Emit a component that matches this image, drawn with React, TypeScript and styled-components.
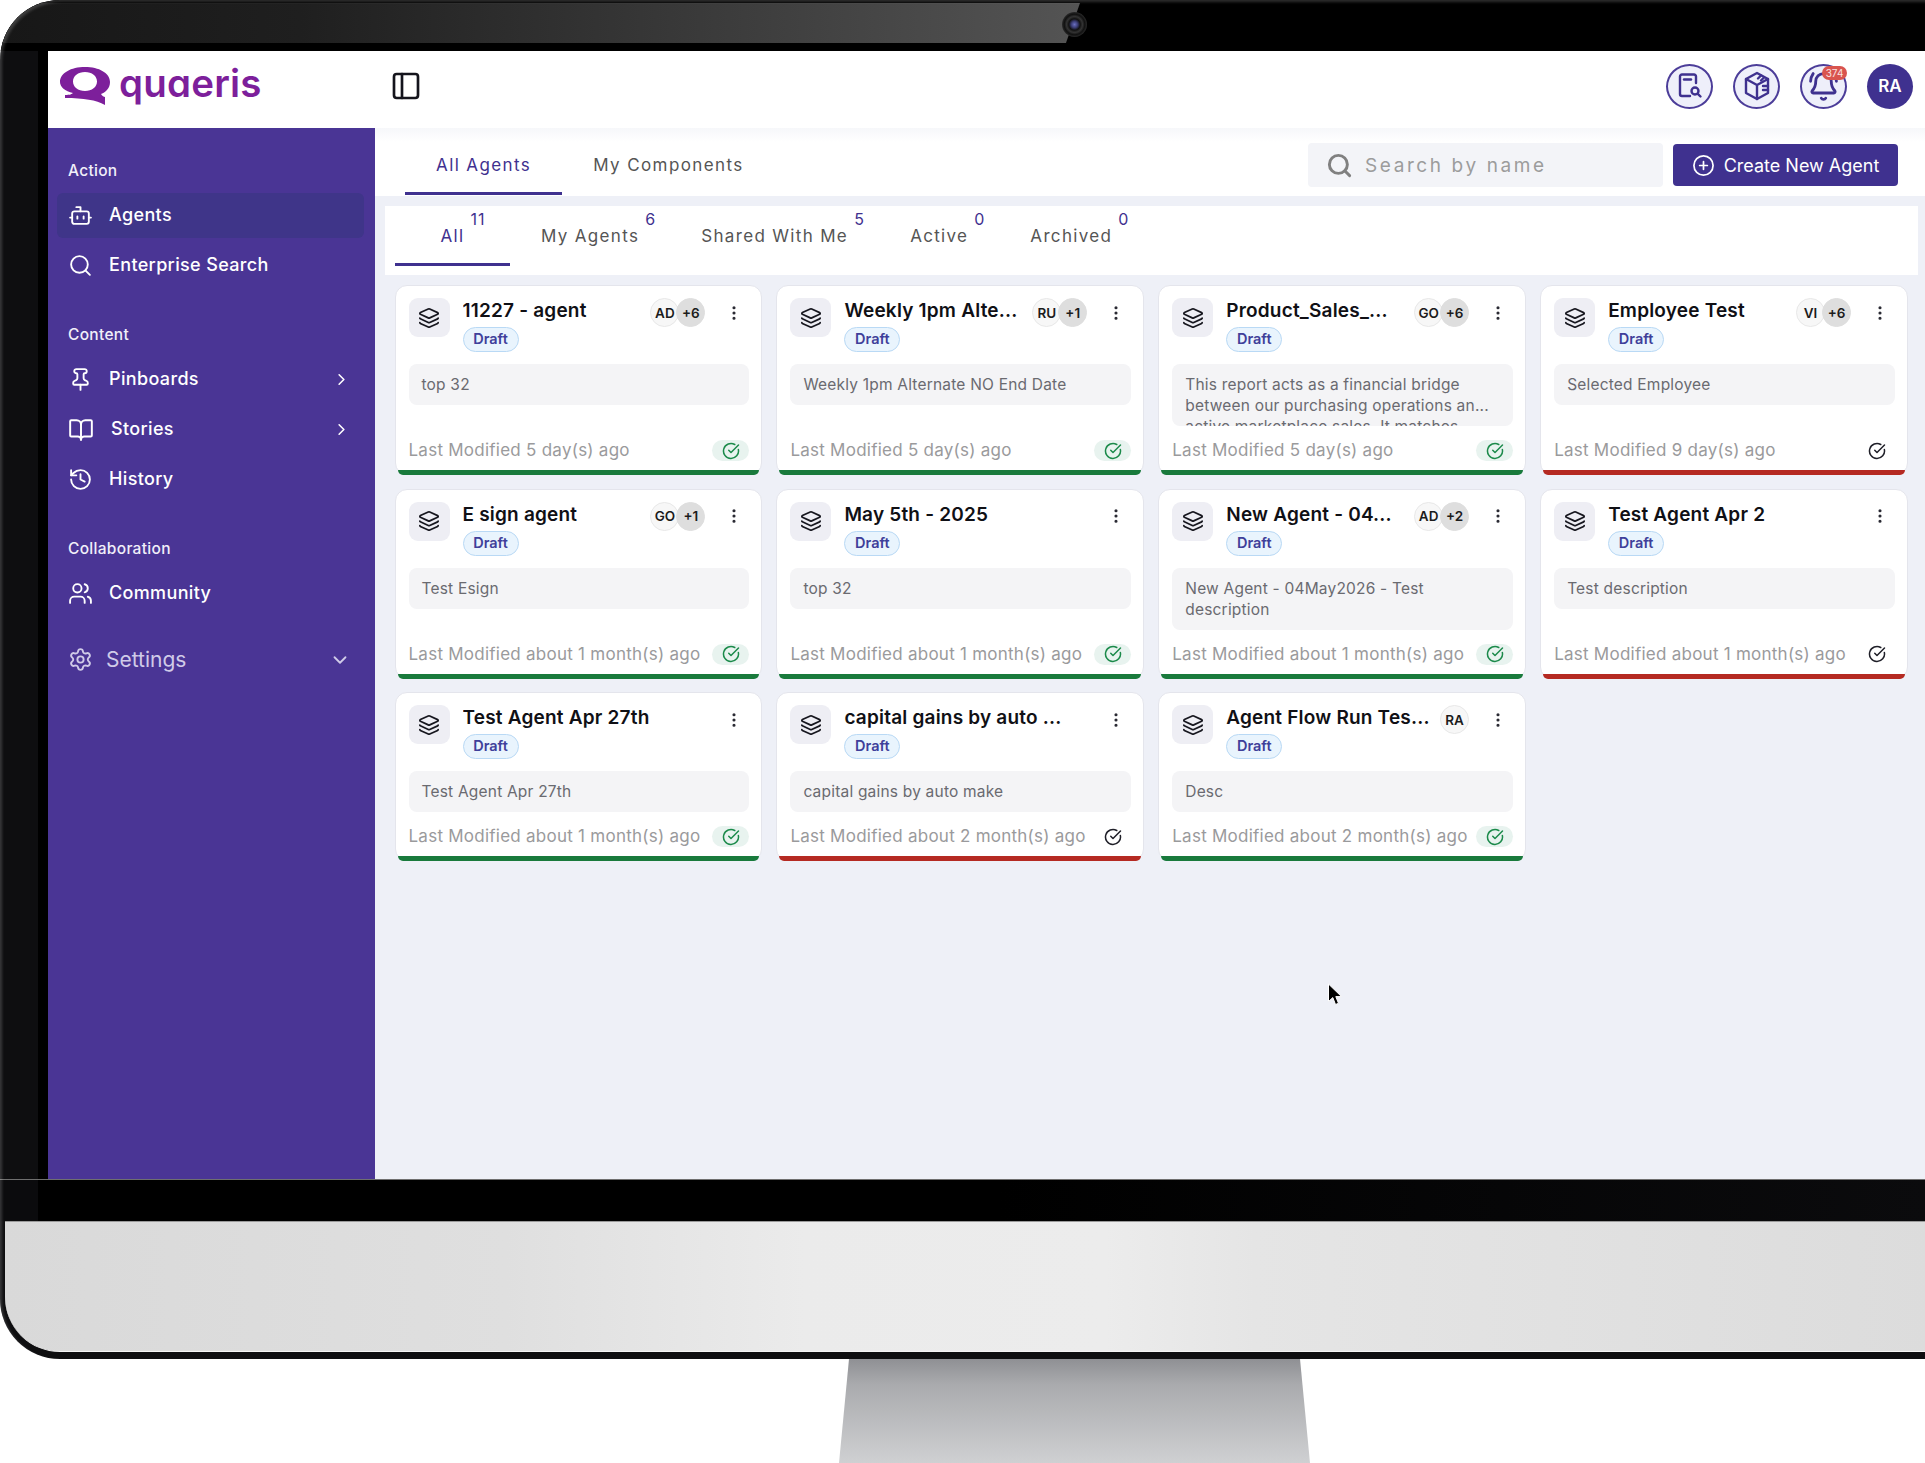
import React from 'react';
import styled, { createGlobalStyle } from 'styled-components';
import {
    Bot,
    BookOpen,
    ChevronDown,
    ChevronRight,
    CircleCheckBig,
    CirclePlus,
    EllipsisVertical,
    History,
    Layers,
    PanelLeft,
    Pin,
    Search,
    Settings,
    Users,
    BellRing,
} from 'lucide-react';

const PURPLE = '#3f318f';
const FONT = 'Inter, "Open Sans", sans-serif';

interface AgentCard {
    title: string;
    lines: string[];
    modified: string;
    owner?: string;
    extra?: string;
    published: boolean;
}

const agents: AgentCard[] = [
    { title: '11227 - agent', lines: ['top 32'], modified: '5 day(s)', owner: 'AD', extra: '+6', published: true },
    { title: 'Weekly 1pm Alte...', lines: ['Weekly 1pm Alternate NO End Date'], modified: '5 day(s)', owner: 'RU', extra: '+1', published: true },
    {
        title: 'Product_Sales_...',
        lines: ['This report acts as a financial bridge', 'between our purchasing operations an...', 'active marketplace sales. It matches'],
        modified: '5 day(s)',
        owner: 'GO',
        extra: '+6',
        published: true,
    },
    { title: 'Employee Test', lines: ['Selected Employee'], modified: '9 day(s)', owner: 'VI', extra: '+6', published: false },
    { title: 'E sign agent', lines: ['Test Esign'], modified: 'about 1 month(s)', owner: 'GO', extra: '+1', published: true },
    { title: 'May 5th - 2025', lines: ['top 32'], modified: 'about 1 month(s)', published: true },
    {
        title: 'New Agent - 04...',
        lines: ['New Agent - 04May2026 - Test', 'description'],
        modified: 'about 1 month(s)',
        owner: 'AD',
        extra: '+2',
        published: true,
    },
    { title: 'Test Agent Apr 2', lines: ['Test description'], modified: 'about 1 month(s)', published: false },
    { title: 'Test Agent Apr 27th', lines: ['Test Agent Apr 27th'], modified: 'about 1 month(s)', published: true },
    { title: 'capital gains by auto ...', lines: ['capital gains by auto make'], modified: 'about 2 month(s)', published: false },
    { title: 'Agent Flow Run Tes...', lines: ['Desc'], modified: 'about 2 month(s)', extra: 'RA', published: true },
];

const filters = [
    { label: 'All', count: '11' },
    { label: 'My Agents', count: '6' },
    { label: 'Shared With Me', count: '5' },
    { label: 'Active', count: '0' },
    { label: 'Archived', count: '0' },
];

const Logo = () => (
    <LogoWrap>
        <svg width="50" height="38" viewBox="0 0 50 38">
            <path
                fill="#7d1f9b"
                fillRule="evenodd"
                d="M25 0C39 0 50 6 50 15C50 21 46 25 41 27C42 29 44 30 45 30L45 38C36 33 24 31 5 31L5 28C10 28 12 27 13 26C5 24 0 20 0 15C0 6 11 0 25 0ZM25 5C18 5 13 9 13 14.500C13 20 18 24 25 24C32 24 37 20 37 14.500C37 9 32 5 25 5Z"
            />
        </svg>
        <LogoText>quaeris</LogoText>
    </LogoWrap>
);

const ReportIcon = () => (
    <svg width="26" height="28" viewBox="0 0 26 28" fill="none" stroke={PURPLE} strokeWidth="2.400" strokeLinecap="round" strokeLinejoin="round">
        <path d="M19 11V4.500A2 2 0 0 0 17 2.500H5A2 2 0 0 0 3 4.500V22A2 2 0 0 0 5 24H13" />
        <path d="M7 7.500H14" />
        <circle cx="18" cy="19" r="3.500" />
        <path d="M20.800 21.800L23.500 24.500" />
    </svg>
);

const BoxIcon = () => (
    <svg width="28" height="30" viewBox="0 0 28 30" fill="none" stroke={PURPLE} strokeWidth="2.400" strokeLinecap="round" strokeLinejoin="round">
        <path d="M14 2L25 8V22L14 28L3 22V8L14 2Z" />
        <path d="M3 8L14 14L25 8M14 14V28" />
        <path d="M18 4.500L15 7.500M21 6.500L18 9.500M20 15H25M20 19H25" />
    </svg>
);

const Cursor = () => (
    <CursorWrap>
        <svg width="16" height="24" viewBox="0 0 16 24">
            <path d="M1.500 1V18.500L5.800 14.600L8.500 21.500L11.500 20.300L8.800 13.600H14.500L1.500 1Z" fill="#000" stroke="#fff" strokeWidth="1" />
        </svg>
    </CursorWrap>
);

const Card = ({ agent }: { agent: AgentCard }) => (
    <CardBox>
        <CardHead>
            <IconTile>
                <Layers size={22} strokeWidth={1.9} color="#17171f" />
            </IconTile>
            <TitleCol>
                <CardTitle>{agent.title}</CardTitle>
                <DraftPill>Draft</DraftPill>
            </TitleCol>
            <Avatars>
                {agent.owner && <Avatar>{agent.owner}</Avatar>}
                {agent.extra && <Avatar $muted={agent.extra !== 'RA'}>{agent.extra}</Avatar>}
            </Avatars>
            <Kebab>
                <EllipsisVertical size={18} strokeWidth={2.2} color="#2a2a33" />
            </Kebab>
        </CardHead>
        <Description>
            {agent.lines.map((line) => (
                <DescLine key={line}>{line}</DescLine>
            ))}
        </Description>
        <CardFoot>
            <Modified>Last Modified {agent.modified} ago</Modified>
            <StatusPill $on={agent.published}>
                <CircleCheckBig size={18} strokeWidth={2} color={agent.published ? '#1b8a4a' : '#1f1f28'} />
            </StatusPill>
        </CardFoot>
        <StatusBar $on={agent.published} />
    </CardBox>
);

const App = () => (
    <>
        <GlobalStyle />
        <Monitor>
            <TopBezel>
                <Sheen />
                <Camera />
            </TopBezel>
            <Screen>
                <Sidebar>
                    <Logo />
                    <Nav>
                        <NavGroup>
                            <GroupLabel>Action</GroupLabel>
                            <NavRow $active>
                                <Bot size={25} strokeWidth={1.8} />
                                <NavText>Agents</NavText>
                            </NavRow>
                            <NavRow>
                                <Search size={25} strokeWidth={1.8} />
                                <NavText>Enterprise Search</NavText>
                            </NavRow>
                        </NavGroup>
                        <NavGroup>
                            <GroupLabel>Content</GroupLabel>
                            <NavRow>
                                <Pin size={25} strokeWidth={1.8} />
                                <NavText>Pinboards</NavText>
                                <Chevron>
                                    <ChevronRight size={19} strokeWidth={2} />
                                </Chevron>
                            </NavRow>
                            <NavRow>
                                <BookOpen size={26} strokeWidth={1.8} />
                                <NavText $shift>Stories</NavText>
                                <Chevron>
                                    <ChevronRight size={19} strokeWidth={2} />
                                </Chevron>
                            </NavRow>
                            <NavRow>
                                <History size={25} strokeWidth={1.8} />
                                <NavText>History</NavText>
                            </NavRow>
                        </NavGroup>
                        <NavGroup>
                            <GroupLabel>Collaboration</GroupLabel>
                            <NavRow>
                                <Users size={25} strokeWidth={1.8} />
                                <NavText>Community</NavText>
                            </NavRow>
                        </NavGroup>
                        <SettingsRow>
                            <Settings size={25} strokeWidth={1.8} />
                            <SettingsText>Settings</SettingsText>
                            <Chevron>
                                <ChevronDown size={22} strokeWidth={2} />
                            </Chevron>
                        </SettingsRow>
                    </Nav>
                </Sidebar>
                <Main>
                    <Header>
                        <PanelLeft size={32} strokeWidth={2} color="#14141c" />
                        <HeaderIcons>
                            <RoundIcon>
                                <ReportIcon />
                            </RoundIcon>
                            <RoundIcon>
                                <BoxIcon />
                            </RoundIcon>
                            <RoundIcon>
                                <BellRing size={31} strokeWidth={2.2} color={PURPLE} />
                                <Badge>374</Badge>
                            </RoundIcon>
                            <UserCircle>RA</UserCircle>
                        </HeaderIcons>
                    </Header>
                    <PrimaryBar>
                        <PrimaryTabs>
                            <PrimaryTab $active>All Agents</PrimaryTab>
                            <PrimaryTab>My Components</PrimaryTab>
                        </PrimaryTabs>
                        <SearchBox>
                            <Search size={27} strokeWidth={2.6} color="#808080" />
                            <SearchPlaceholder>Search by name</SearchPlaceholder>
                        </SearchBox>
                        <CreateButton>
                            <CirclePlus size={23} strokeWidth={1.8} />
                            Create New Agent
                        </CreateButton>
                    </PrimaryBar>
                    <FilterBar>
                        {filters.map((filter, index) => (
                            <FilterTab key={filter.label} $active={index === 0}>
                                <FilterLabel>
                                    {filter.label}
                                    <FilterCount>{filter.count}</FilterCount>
                                </FilterLabel>
                            </FilterTab>
                        ))}
                    </FilterBar>
                    <CardGrid>
                        {agents.map((agent) => (
                            <Card key={agent.title} agent={agent} />
                        ))}
                    </CardGrid>
                    <Cursor />
                </Main>
            </Screen>
            <BlackBand />
            <Chin />
        </Monitor>
        <Stand />
    </>
);

const GlobalStyle = createGlobalStyle`
    html, body {
        margin: 0;
        padding: 0;
        background: #fff;
        overflow: hidden;
    }
    * {
        box-sizing: border-box;
    }
    body {
        font-family: ${FONT};
    }
`;

const Monitor = styled.div`
    position: relative;
    width: 1925px;
    height: 1359px;
    display: flex;
    flex-direction: column;
    background: #0e0e10;
    border-radius: 60px 0 0 60px;
    overflow: hidden;
    &::after {
        content: '';
        position: absolute;
        inset: 0;
        border-radius: 60px 0 0 60px;
        box-shadow: inset 2px 2px 3px rgba(255, 255, 255, 0.18);
        pointer-events: none;
    }
`;

const TopBezel = styled.div`
    position: relative;
    flex: 0 0 51px;
    background: #000;
`;

const Sheen = styled.div`
    position: absolute;
    left: 0;
    top: 3px;
    width: 1080px;
    height: 40px;
    background: linear-gradient(90deg, #171717 0, #1f1f1f 300px, #3a3a3a 700px, #545454 1080px);
    clip-path: polygon(0 0, 100% 0, 98.700% 100%, 0 100%);
`;

const Camera = styled.div`
    position: absolute;
    left: 1062px;
    top: 12px;
    width: 25px;
    height: 25px;
    border-radius: 50%;
    background: radial-gradient(circle, #6a6fc0 0, #3b3d75 18%, #111 32%, #333 45%, #111 58%, #2c2c2c 72%, #070707 85%);
`;

const Screen = styled.div`
    flex: 0 0 1128px;
    margin-left: 38px;
    display: flex;
    border-left: 10px solid #000;
`;

const Sidebar = styled.aside`
    flex: 0 0 327px;
    display: flex;
    flex-direction: column;
    background: #4a3595;
`;

const LogoWrap = styled.div`
    flex: 0 0 77px;
    display: flex;
    align-items: flex-start;
    gap: 9px;
    padding: 16px 0 0 12px;
    background: #fff;
`;

const LogoText = styled.span`
    color: #7d1f9b;
    font-size: 38.500px;
    font-weight: 600;
    font-feature-settings: 'cv11';
    line-height: 32px;
    letter-spacing: 0.2px;
`;

const Nav = styled.nav`
    display: flex;
    flex-direction: column;
    padding: 33px 11px 0 9px;
`;

const NavGroup = styled.div`
    display: flex;
    flex-direction: column;
    gap: 5px;
    margin-bottom: 37px;
    &:nth-child(3) {
        margin-bottom: 21px;
    }
`;

const GroupLabel = styled.div`
    height: 20px;
    margin: 0 0 7px 11px;
    color: #f1eff9;
    font-size: 15.500px;
    font-weight: 500;
    line-height: 20px;
    letter-spacing: 0.3px;
`;

const NavRow = styled.div<{ $active?: boolean }>`
    height: 45px;
    display: flex;
    align-items: center;
    padding: 0 13px 0 11px;
    border-radius: 6px;
    color: #fff;
    background: ${(p) => (p.$active ? '#3f3589' : 'transparent')};
`;

const NavText = styled.span<{ $shift?: boolean }>`
    margin-left: ${(p) => (p.$shift ? '17px' : '16px')};
    padding-bottom: 2px;
    font-size: 18px;
    font-weight: 500;
    letter-spacing: 0.35px;
`;

const Chevron = styled.span`
    display: flex;
    margin-left: auto;
`;

const SettingsRow = styled(NavRow)`
    color: #d0cbe8;
`;

const SettingsText = styled.span`
    margin-left: 13px;
    font-size: 21px;
    font-weight: 400;
`;

const Main = styled.main`
    position: relative;
    flex: 1;
    min-width: 0;
    display: flex;
    flex-direction: column;
    background: #eef0f7;
`;

const Header = styled.header`
    flex: 0 0 77px;
    display: flex;
    align-items: center;
    justify-content: space-between;
    padding: 0 12px 7px 15px;
    background: #fff;
`;

const HeaderIcons = styled.div`
    display: flex;
    gap: 20px;
`;

const RoundIcon = styled.div`
    position: relative;
    width: 47px;
    height: 45px;
    display: flex;
    align-items: center;
    justify-content: center;
    border: 2px solid #4c3d99;
    border-radius: 50%;
    background: #eeeffa;
`;

const Badge = styled.span`
    position: absolute;
    top: 0;
    right: -2px;
    width: 25px;
    height: 14px;
    border-radius: 7px;
    background: #d9544f;
    color: #f8e3e2;
    font-size: 10px;
    line-height: 14px;
    text-align: center;
`;

const UserCircle = styled.div`
    width: 46px;
    height: 45px;
    display: flex;
    align-items: center;
    justify-content: center;
    border-radius: 50%;
    background: ${PURPLE};
    color: #fff;
    font-size: 17px;
    font-weight: 600;
`;

const PrimaryBar = styled.div`
    flex: 0 0 68px;
    display: flex;
    align-items: center;
    padding: 6px 27px 0 30px;
    background: linear-gradient(180deg, #f6f7fa 0, #fff 14px);
`;

const PrimaryTabs = styled.div`
    display: flex;
    align-self: stretch;
    margin: -6px auto 1px 0;
`;

const PrimaryTab = styled.div<{ $active?: boolean }>`
    display: flex;
    align-items: center;
    padding: 9px 31px 0;
    border-bottom: 3px solid ${(p) => (p.$active ? PURPLE : 'transparent')};
    color: ${(p) => (p.$active ? PURPLE : '#555')};
    font-size: 17px;
    font-weight: 400;
    letter-spacing: 1.400px;
`;

const SearchBox = styled.div`
    width: 355px;
    height: 44px;
    display: flex;
    align-items: center;
    gap: 12px;
    padding-left: 18px;
    border-radius: 4px;
    background: #f3f4f8;
`;

const SearchPlaceholder = styled.span`
    color: #9c9c9c;
    font-size: 19px;
    letter-spacing: 2.600px;
`;

const CreateButton = styled.div`
    width: 225px;
    height: 42px;
    margin-left: 10px;
    display: flex;
    align-items: center;
    justify-content: center;
    gap: 9px;
    border-radius: 4px;
    background: ${PURPLE};
    color: #fff;
    font-size: 18px;
`;

const FilterBar = styled.div`
    flex: 0 0 69px;
    display: flex;
    margin: 10px 7px 0 10px;
    padding-left: 10px;
    background: #fff;
`;

const FilterTab = styled.div<{ $active?: boolean }>`
    min-width: 115px;
    height: 60px;
    display: flex;
    align-items: center;
    justify-content: center;
    padding: 0 31px;
    border-bottom: 3px solid ${(p) => (p.$active ? PURPLE : 'transparent')};
    color: ${(p) => (p.$active ? PURPLE : '#555')};
    font-size: 17px;
    font-weight: 400;
    letter-spacing: 1.330px;
`;

const FilterLabel = styled.span`
    position: relative;
    top: 1px;
`;

const FilterCount = styled.span`
    position: absolute;
    left: 100%;
    top: -17px;
    margin-left: 6px;
    color: ${PURPLE};
    font-size: 16px;
    font-weight: 400;
    letter-spacing: 1px;
`;

const CardGrid = styled.div`
    display: grid;
    grid-template-columns: repeat(4, 1fr);
    gap: 13.500px 14px;
    padding: 10px 17px 0 19.500px;
`;

const CardBox = styled.article`
    display: flex;
    flex-direction: column;
    padding: 12px 12px 0 13px;
    border: 1px solid #e4e5ec;
    border-radius: 12px;
    background: #fff;
`;

const CardHead = styled.div`
    display: flex;
    align-items: flex-start;
`;

const IconTile = styled.div`
    flex: 0 0 41px;
    height: 39px;
    display: flex;
    align-items: center;
    justify-content: center;
    border-radius: 9px;
    background: #eeeef4;
`;

const TitleCol = styled.div`
    flex: 1;
    min-width: 0;
    margin-left: 13px;
`;

const CardTitle = styled.div`
    height: 29px;
    overflow: hidden;
    color: #101015;
    font-size: 19px;
    font-weight: 600;
    line-height: 25px;
    letter-spacing: 0.2px;
    white-space: nowrap;
`;

const DraftPill = styled.span`
    display: block;
    width: 56px;
    height: 25px;
    border: 1.500px solid #b9d9f5;
    border-radius: 13px;
    background: #e9f4fd;
    color: #3f3f9a;
    font-size: 14.500px;
    font-weight: 600;
    line-height: 22px;
    text-align: center;
`;

const Avatars = styled.div`
    display: flex;
    margin-left: 8px;
`;

const Avatar = styled.span<{ $muted?: boolean }>`
    width: 29px;
    height: 29px;
    margin-left: -3px;
    display: flex;
    align-items: center;
    justify-content: center;
    border: 1px solid ${(p) => (p.$muted ? '#dedede' : '#e8e8e8')};
    border-radius: 50%;
    background: ${(p) => (p.$muted ? '#dedede' : '#f7f7f7')};
    color: #1c1c1c;
    font-size: 13.500px;
    font-weight: 600;
`;

const Kebab = styled.span`
    flex: 0 0 30px;
    height: 29px;
    margin-left: 14px;
    display: flex;
    align-items: center;
    justify-content: center;
`;

const Description = styled.div`
    max-height: 62px;
    margin-top: 12px;
    padding: 10px 13px;
    overflow: hidden;
    border-radius: 8px;
    background: #f4f4f6;
    color: #6a6a70;
    font-size: 15.500px;
    line-height: 21px;
    letter-spacing: 0.2px;
`;

const DescLine = styled.span`
    display: block;
    white-space: nowrap;
`;

const CardFoot = styled.div`
    margin-top: auto;
    padding-top: 14px;
    display: flex;
    align-items: center;
    justify-content: space-between;
`;

const Modified = styled.span`
    color: #9a9a9c;
    font-size: 17px;
    line-height: 21px;
    letter-spacing: 0.250px;
    white-space: nowrap;
`;

const StatusPill = styled.span<{ $on: boolean }>`
    flex: 0 0 37px;
    height: 21px;
    display: flex;
    align-items: center;
    justify-content: center;
    border-radius: 11px;
    background: ${(p) => (p.$on ? '#e8f3ef' : 'transparent')};
`;

const StatusBar = styled.div<{ $on: boolean }>`
    height: 5px;
    margin: 9px -10px -1px -11px;
    border-radius: 0 0 10px 10px;
    background: ${(p) => (p.$on ? '#197a3c' : '#b52a22')};
`;

const CursorWrap = styled.div`
    position: absolute;
    left: 952px;
    top: 932px;
    display: flex;
`;

const BlackBand = styled.div`
    flex: 0 0 42px;
    background: linear-gradient(90deg, #0b0b0d 38px, #000 38px, #000 1000px, #0b0b0d 1925px);
    border-top: 1px solid #6f6f6f;
`;

const Chin = styled.div`
    flex: 0 0 131px;
    margin-left: 5px;
    border-top: 1px solid #9a9a9a;
    border-bottom: 1px solid #f4f4f4;
    border-radius: 0 0 0 55px;
    background: linear-gradient(90deg, #d9d9d9 0, #dfdfdf 500px, #ebebeb 800px, #ececec 1100px, #e5e5e5 1250px, #dcdcdc 1925px);
`;

const Stand = styled.div`
    width: 471px;
    height: 104px;
    margin-left: 839px;
    background: linear-gradient(180deg, #8f9094 0, #aaabae 25%, #cfd0d2 100%);
    clip-path: polygon(10px 0, 461px 0, 471px 100%, 0 100%);
`;

export default App;
